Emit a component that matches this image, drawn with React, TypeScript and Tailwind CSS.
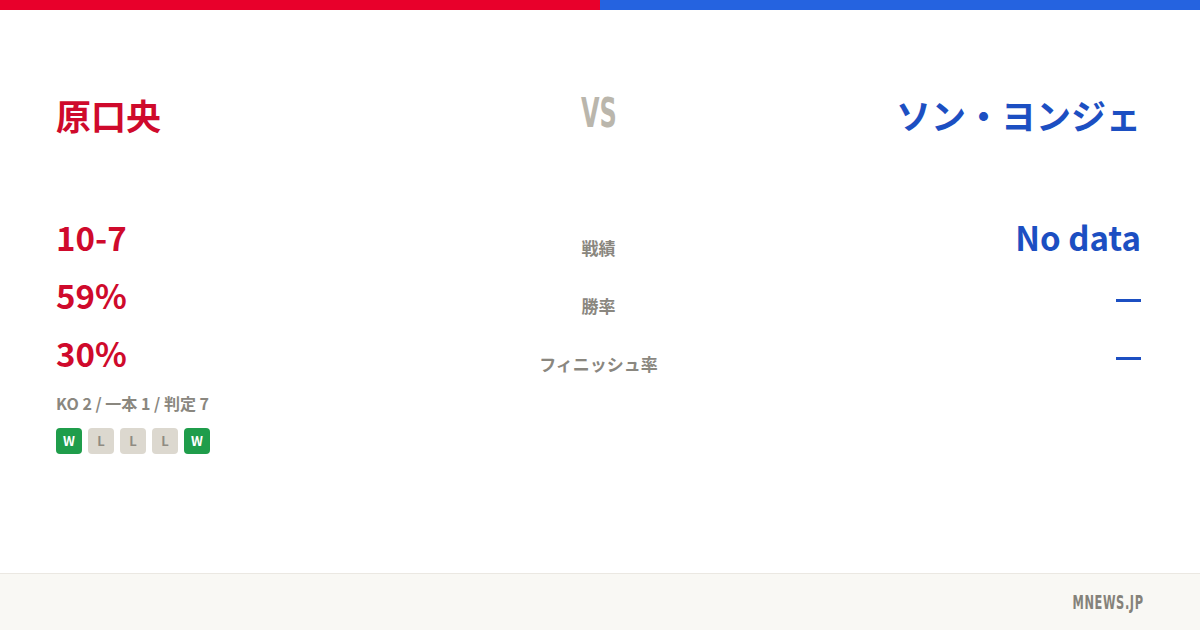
import React from 'react';

// Matchup card: fighter names, stat rows and recent form
const JP = '"Noto Sans CJK JP", "Noto Sans", sans-serif';
const COND = '"DejaVu Sans", "Liberation Sans", sans-serif';

const rows = [
  { label: '戦績', left: '10-7', right: 'No data' },
  { label: '勝率', left: '59%', right: null },
  { label: 'フィニッシュ率', left: '30%', right: null },
];

const form = ['W', 'L', 'L', 'L', 'W'];

function Dash() {
  return <span className="mt-[10px] inline-block h-[3px] w-[25px] bg-[#1c4fc2]" />;
}

function FormBadge({ result }: { result: string }) {
  const win = result === 'W';
  return (
    <div
      className={
        win
          ? 'flex h-[26px] w-[26px] items-center justify-center rounded-[4px] bg-[#1f9d4b] text-[13px] font-bold text-white'
          : 'flex h-[26px] w-[26px] items-center justify-center rounded-[4px] bg-[#dcd8cf] text-[13px] font-bold text-[#8f8b82]'
      }
    >
      {result}
    </div>
  );
}

export default function App() {
  return (
    <div className="flex h-[630px] w-[1200px] flex-col bg-white" style={{ fontFamily: JP }}>
      {/* top accent bar */}
      <div className="flex h-[10px]">
        <div className="flex-1 bg-[#e8002b]" />
        <div className="flex-1 bg-[#2563e0]" />
      </div>

      <div className="flex flex-1 flex-col px-[56px] pr-[59px]">
        {/* names */}
        <div className="mt-[81px] grid grid-cols-3 items-center">
          <div className="text-[35px] font-bold leading-[48px] text-[#cf0a2c]">原口央</div>
          <div className="flex justify-center">
            <span
              className="mb-[4px] inline-block origin-center scale-x-[0.6] text-[40px] font-bold leading-[40px] text-[#bab6ac]"
              style={{ fontFamily: COND }}
            >
              VS
            </span>
          </div>
          <div className="text-right text-[35px] font-bold leading-[48px] text-[#1c4fc2]">ソン・ヨンジェ</div>
        </div>

        {/* stats */}
        <div className="mt-[69px] flex flex-col">
          {rows.map((r) => (
            <div key={r.label} className="grid h-[58px] grid-cols-3 items-center">
              <div className="text-[33px] font-bold leading-[40px] text-[#cf0a2c]">{r.left}</div>
              <div className="pt-[22px] text-center text-[17px] font-bold text-[#8a877f]">{r.label}</div>
              <div className="flex justify-end text-[33px] font-bold leading-[40px] text-[#1c4fc2]">
                {r.right ? r.right : <Dash />}
              </div>
            </div>
          ))}
        </div>

        <div className="mt-[9px] text-[16px] font-bold text-[#8a877f]">KO 2 / 一本 1 / 判定 7</div>

        <div className="mt-[13px] flex gap-[6px]">
          {form.map((f, i) => (
            <FormBadge key={i} result={f} />
          ))}
        </div>
      </div>

      {/* footer */}
      <div className="flex h-[57px] items-center justify-end border-t border-[#ebe8e2] bg-[#f9f8f4] pr-[56px]">
        <span
          className="inline-block origin-right scale-x-[0.6] text-[19px] font-bold tracking-[1px] text-[#85827a]"
          style={{ fontFamily: COND }}
        >
          MNEWS.JP
        </span>
      </div>
    </div>
  );
}
